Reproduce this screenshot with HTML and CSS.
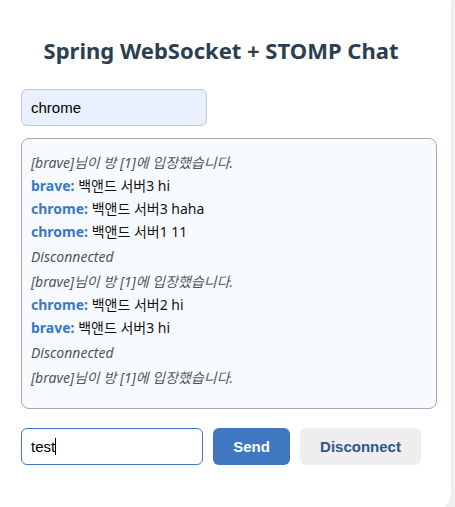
FILE: index.html
```html
<!DOCTYPE html>
<html lang="ko">
<head>
<meta charset="utf-8">
<title>Spring WebSocket + STOMP Chat</title>
<link rel="stylesheet" href="styles.css">
</head>
<body>
<div class="card">
  <h1 class="title">Spring WebSocket + STOMP Chat</h1>
  <input class="name-input" type="text" value="chrome">
  <div class="chat-box">
    <div class="msg sys">[brave]님이 방 [1]에 입장했습니다.</div>
    <div class="msg"><b class="who">brave:</b> 백앤드 서버3 hi</div>
    <div class="msg"><b class="who">chrome:</b> 백앤드 서버3 haha</div>
    <div class="msg"><b class="who">chrome:</b> 백앤드 서버1 11</div>
    <div class="msg sys">Disconnected</div>
    <div class="msg sys">[brave]님이 방 [1]에 입장했습니다.</div>
    <div class="msg"><b class="who">chrome:</b> 백앤드 서버2 hi</div>
    <div class="msg"><b class="who">brave:</b> 백앤드 서버3 hi</div>
    <div class="msg sys">Disconnected</div>
    <div class="msg sys">[brave]님이 방 [1]에 입장했습니다.</div>
  </div>
  <div class="send-row">
    <div class="msg-field">
      <input class="msg-input" type="text" value="test">
      <span class="caret"></span>
    </div>
    <button class="btn btn-send">Send</button>
    <button class="btn btn-disconnect">Disconnect</button>
  </div>
</div>
</body>
</html>
```
FILE: styles.css
```css
html, body {
  margin: 0;
  padding: 0;
}
body {
  background: #f1f1f3;
  font-family: "Noto Sans", "Noto Sans CJK KR", sans-serif;
}
.card {
  width: 451px;
  box-sizing: border-box;
  background: #ffffff;
  border-radius: 0 0 16px 0;
  box-shadow: 0 0 5px rgba(0, 0, 0, 0.05);
  padding: 35px 30px 45px 21px;
}
.title {
  margin: 0 0 24px 0;
  width: 400px;
  text-align: center;
  font-size: 22px;
  font-weight: 700;
  color: #2c3e50;
  line-height: 30px;
}
.name-input {
  display: block;
  box-sizing: border-box;
  width: 186px;
  height: 37px;
  margin: 0;
  padding: 0 9px;
  border: 1px solid #c6c8cc;
  border-radius: 6px;
  background: #e8f0fe;
  font-family: "Liberation Sans", Arial, sans-serif;
  font-size: 15px;
  color: #000;
  outline: none;
}
.chat-box {
  box-sizing: border-box;
  width: 416px;
  height: 271px;
  margin-top: 12px;
  padding: 10px 9px;
  border: 1px solid #a9a9a9;
  border-radius: 8px;
  background: #f7fbff;
  overflow: hidden;
  font-size: 14px;
  color: #111;
}
.msg {
  line-height: 23px;
  white-space: nowrap;
}
.sys {
  margin-top: 2px;
  font-style: italic;
  color: #555;
}
.who {
  color: #3a78c2;
  font-weight: 700;
}
.send-row {
  display: flex;
  gap: 10px;
  margin-top: 19px;
  width: 400px;
}
.msg-field {
  position: relative;
  width: 182px;
  height: 37px;
}
.msg-input {
  display: block;
  box-sizing: border-box;
  width: 182px;
  height: 37px;
  margin: 0;
  padding: 0 9px;
  border: 1px solid #3d78c0;
  border-radius: 6px;
  background: #fff;
  font-family: "Liberation Sans", Arial, sans-serif;
  font-size: 15px;
  color: #000;
  outline: none;
}
.caret {
  position: absolute;
  left: 34px;
  top: 10px;
  width: 1px;
  height: 17px;
  background: #000;
}
.btn {
  box-sizing: border-box;
  height: 37px;
  margin: 0;
  padding: 0;
  border: none;
  border-radius: 6px;
  font-family: "Liberation Sans", Arial, sans-serif;
  font-size: 15px;
  font-weight: 700;
  cursor: pointer;
}
.btn-send {
  width: 77px;
  background: #3f78c1;
  color: #ffffff;
}
.btn-disconnect {
  width: 121px;
  background: #eeeeee;
  color: #2d5592;
}
```
